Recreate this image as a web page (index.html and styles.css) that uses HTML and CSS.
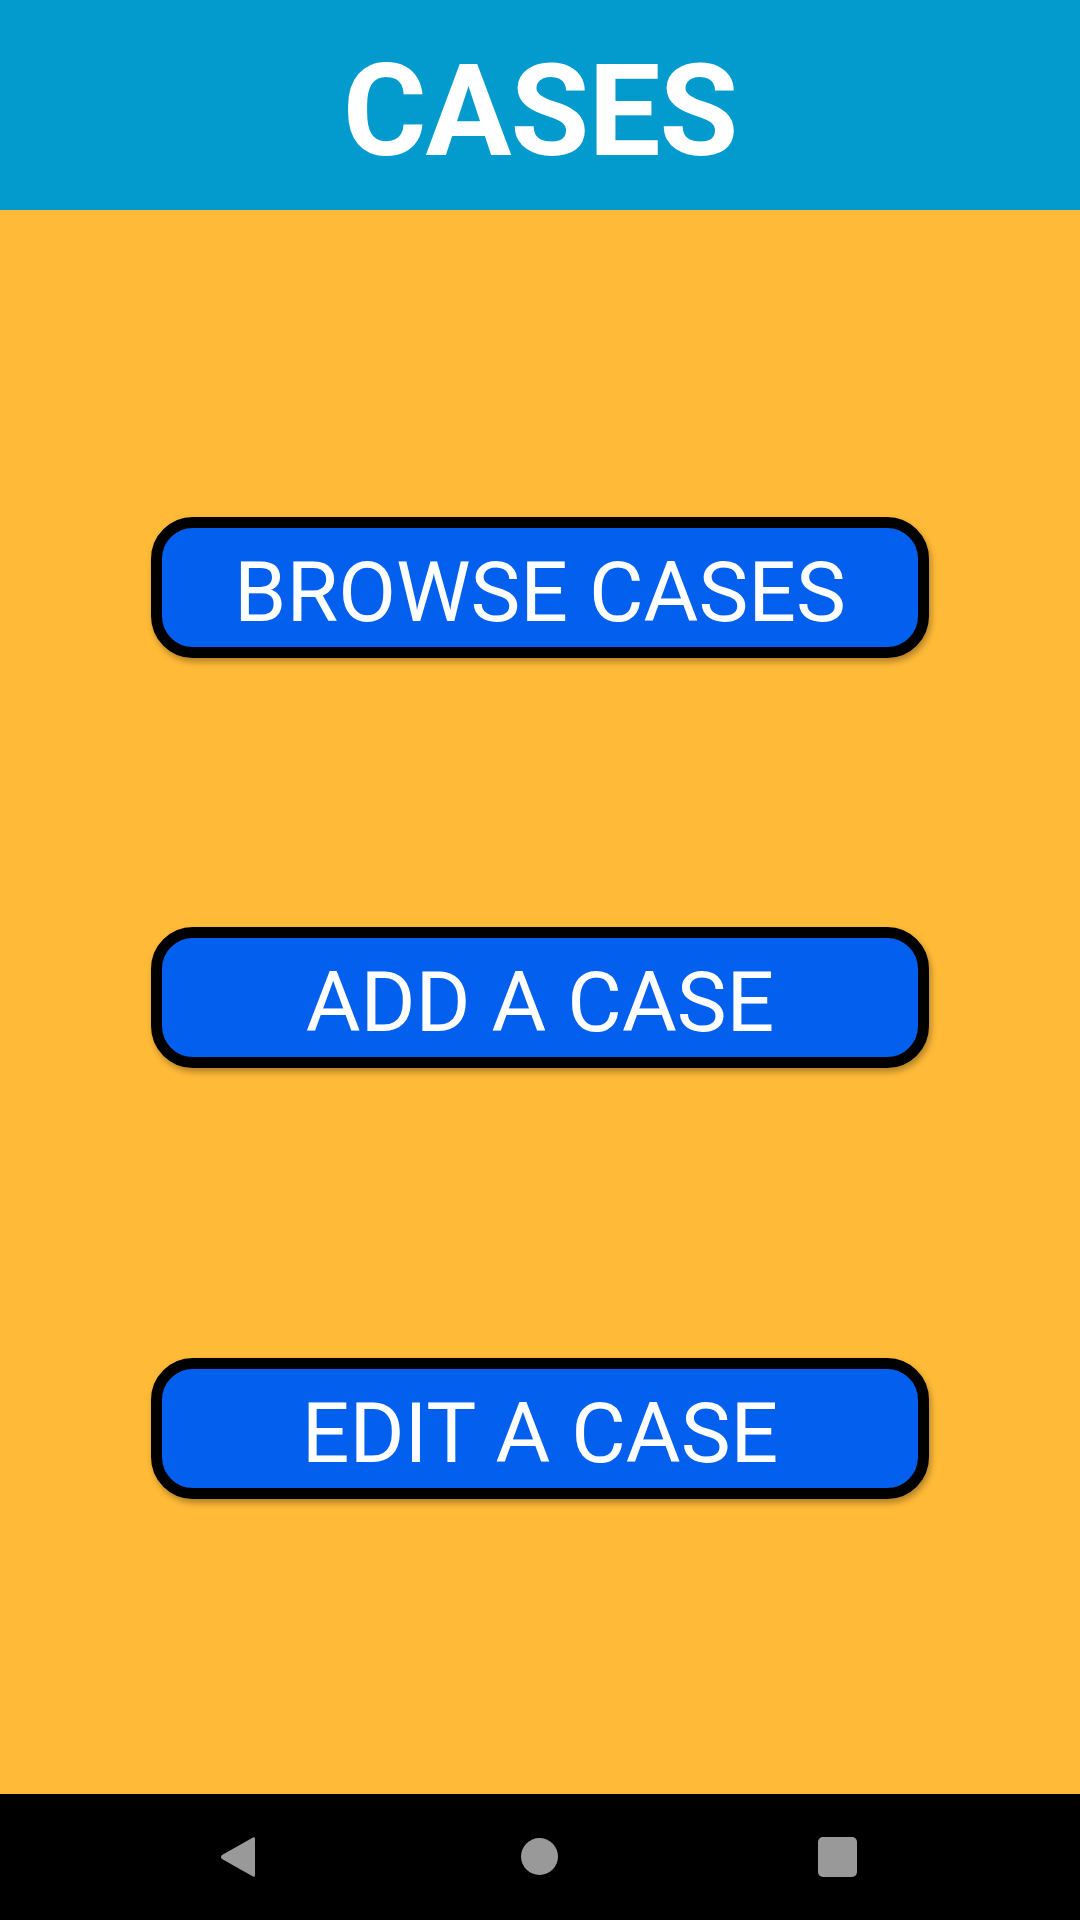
FILE: index.html
```html
<!DOCTYPE html>
<html>
<head>
<meta charset="utf-8">
<link rel="stylesheet" href="styles.css">
</head>
<body>
<div class="screen">
  <header class="topbar"><h1 class="title">CASES</h1></header>
  <main class="content">
    <button class="case-btn btn-browse">BROWSE CASES</button>
    <button class="case-btn btn-add">ADD A CASE</button>
    <button class="case-btn btn-edit">EDIT A CASE</button>
  </main>
  <nav class="navbar">
    <svg class="nav-back" width="38" height="42" viewBox="0 0 38 42"><path d="M34 1.5 Q36 0.5 36 3 L36 39 Q36 41.5 34 40.5 L3 23 Q1 21 3 19 Z" fill="#999"/></svg>
    <span class="nav-home"></span>
    <span class="nav-recent"></span>
  </nav>
</div>
</body>
</html>
```
FILE: styles.css
```css
html, body {
  margin: 0;
  padding: 0;
}
body {
  width: 1080px;
  height: 1920px;
  overflow: hidden;
  font-family: Roboto, "Liberation Sans", sans-serif;
}
.screen {
  display: flex;
  flex-direction: column;
  width: 1080px;
  height: 1920px;
  background: #FFBA37;
}
.topbar {
  height: 210px;
  background: #039BCD;
  display: flex;
  align-items: center;
  justify-content: center;
}
.title {
  margin: 0;
  color: #fff;
  font-weight: 700;
  font-size: 128px;
  line-height: 1;
  letter-spacing: -1px;
  padding-top: 12px;
}
.content {
  flex: 1;
  display: flex;
  flex-direction: column;
  align-items: center;
}
.case-btn {
  box-sizing: border-box;
  width: 778px;
  height: 141px;
  border: 11px solid #000;
  border-radius: 42px;
  background: #0360EE;
  color: #fff;
  font-family: Roboto, "Liberation Sans", sans-serif;
  font-size: 84px;
  font-weight: 400;
  line-height: 1;
  padding: 10px 0 0;
  box-shadow: 2px 4px 6px rgba(0,0,0,0.3);
}
.btn-browse { margin-top: 307px; }
.btn-add { margin-top: 269px; }
.btn-edit { margin-top: 290px; }
.navbar {
  height: 126px;
  background: #000;
  position: relative;
}
.nav-back {
  position: absolute;
  left: 219px;
  top: 42px;
}
.nav-home {
  position: absolute;
  left: 521px;
  top: 44px;
  width: 37px;
  height: 37px;
  border-radius: 50%;
  background: #999;
}
.nav-recent {
  position: absolute;
  left: 818px;
  top: 43px;
  width: 39px;
  height: 40px;
  border-radius: 5px;
  background: #999;
}
```
